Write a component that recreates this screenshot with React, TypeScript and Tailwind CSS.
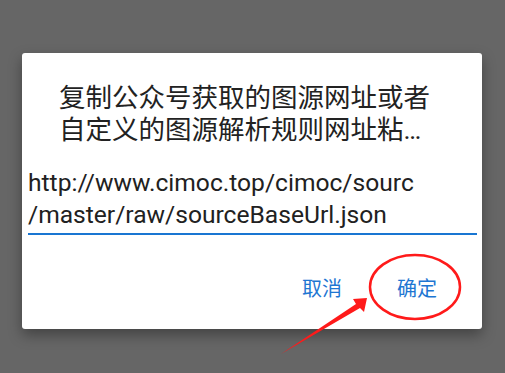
const cjk = { fontFamily: '"Noto Sans CJK SC", "Noto Sans", sans-serif' }

const App = () => {
  return (
    <div className="relative h-[373px] w-[505px] overflow-hidden bg-[#666666]" style={cjk}>
      <div className="pl-[22px] pt-[53px]">
        {/* 对话框 */}
        <div className="flex h-[276px] w-[460px] flex-col rounded-[3px] bg-white shadow-[0_6px_14px_rgba(0,0,0,0.35)]">
          <div className="pl-[37px] pr-[30px] pt-[27px] text-[26.5px] leading-[32px] text-[#222222]">
            <p>复制公众号获取的图源网址或者</p>
            <p>
              自定义的图源解析规则网址粘
              <span style={{ fontFamily: 'Roboto, sans-serif' }}>…</span>
            </p>
          </div>
          <div
            className="mx-[6px] mr-[5px] mt-[21px] border-b-2 border-[#1976d2] pb-[2px] text-[24.6px] leading-[32px] text-[#212121]"
            style={{ fontFamily: 'Roboto, "Liberation Sans", sans-serif' }}
          >
            <p className="whitespace-nowrap">http://www.cimoc.top/cimoc/sourc</p>
            <p className="whitespace-nowrap">/master/raw/sourceBaseUrl.json</p>
          </div>
          <div className="mt-[41px] flex justify-end gap-[55px] pr-[45px] text-[20px] leading-[24px] text-[#1e76d2]">
            <span>取消</span>
            <span>确定</span>
          </div>
        </div>
      </div>
      {/* 标注：红圈和箭头 */}
      <svg className="absolute left-0 top-0" width="505" height="373" viewBox="0 0 505 373">
        <ellipse cx="415" cy="287" rx="45" ry="32" fill="none" stroke="#ff1a1a" strokeWidth="2.5" />
        <polygon points="281,354 356,304 353,299 367,298 364,312 360,308" fill="#ff1a1a" />
      </svg>
    </div>
  )
}

export default App
